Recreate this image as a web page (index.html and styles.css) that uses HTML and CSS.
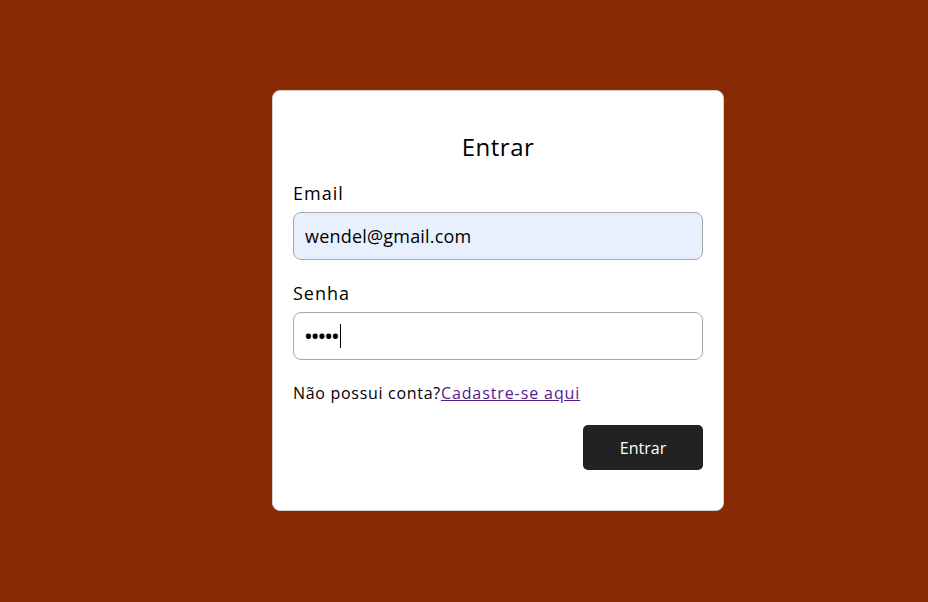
FILE: index.html
```html
<!DOCTYPE html>
<html lang="pt-BR">
<head>
<meta charset="utf-8">
<title>Entrar</title>
<link rel="stylesheet" href="styles.css">
</head>
<body>
<main class="page">
  <form class="card">
    <h1 class="title">Entrar</h1>
    <div class="field">
      <label class="label" for="email">Email</label>
      <input class="input input-filled" id="email" type="email" value="wendel@gmail.com">
    </div>
    <div class="field">
      <label class="label" for="senha">Senha</label>
      <div class="input input-pass"><span class="dots">•••••</span><span class="caret"></span></div>
    </div>
    <p class="signup">Não possui conta?<a class="link" href="#">Cadastre-se aqui</a></p>
    <div class="actions">
      <button class="btn" type="button">Entrar</button>
    </div>
  </form>
</main>
</body>
</html>
```

FILE: styles.css
```css
* { box-sizing: border-box; }
html, body { margin: 0; padding: 0; }
body {
  background: #8a2a05;
  font-family: "Open Sans", "Liberation Sans", sans-serif;
  color: #000;
}
.page {
  height: 602px;
  display: flex;
  align-items: flex-start;
  padding: 90px 0 0 272px;
}
.card {
  width: 452px;
  height: 421px;
  background: #fff;
  border: 1px solid #cfcfcf;
  border-radius: 8px;
  padding: 40px 20px 0 20px;
  display: flex;
  flex-direction: column;
}
.title {
  margin: 0 0 18px 0;
  font-size: 24px;
  font-weight: 400;
  text-align: center;
  line-height: 32px;
  letter-spacing: 0.5px;
}
.field {
  display: flex;
  flex-direction: column;
  margin-bottom: 21px;
}
.label {
  font-size: 18px;
  font-weight: 500;
  line-height: 24px;
  margin-bottom: 7px;
  letter-spacing: 1px;
}
.input {
  width: 410px;
  height: 48px;
  border: 1px solid #a8a8a8;
  border-radius: 8px;
  padding: 0 11px;
  font-family: inherit;
  font-size: 18px;
  color: #000;
  background: #fff;
  outline: none;
  letter-spacing: 0.2px;
}
.input-filled { background: #e8f0fe; }
.input-pass {
  display: flex;
  align-items: center;
}
.dots {
  font-size: 18px;
  font-weight: 700;
  letter-spacing: 0;
}
.caret {
  display: inline-block;
  width: 1px;
  height: 24px;
  background: #000;
  margin-left: 1px;
}
.signup {
  margin: 0;
  font-size: 16px;
  line-height: 24px;
  letter-spacing: 0.7px;
}
.link { color: #551a8b; letter-spacing: 0.9px; }
.actions {
  display: flex;
  justify-content: flex-end;
  margin-top: 20px;
}
.btn {
  width: 120px;
  height: 45px;
  background: #222;
  color: #fff;
  border: none;
  border-radius: 5px;
  font-family: inherit;
  font-size: 16px;
  font-weight: 500;
}
```
